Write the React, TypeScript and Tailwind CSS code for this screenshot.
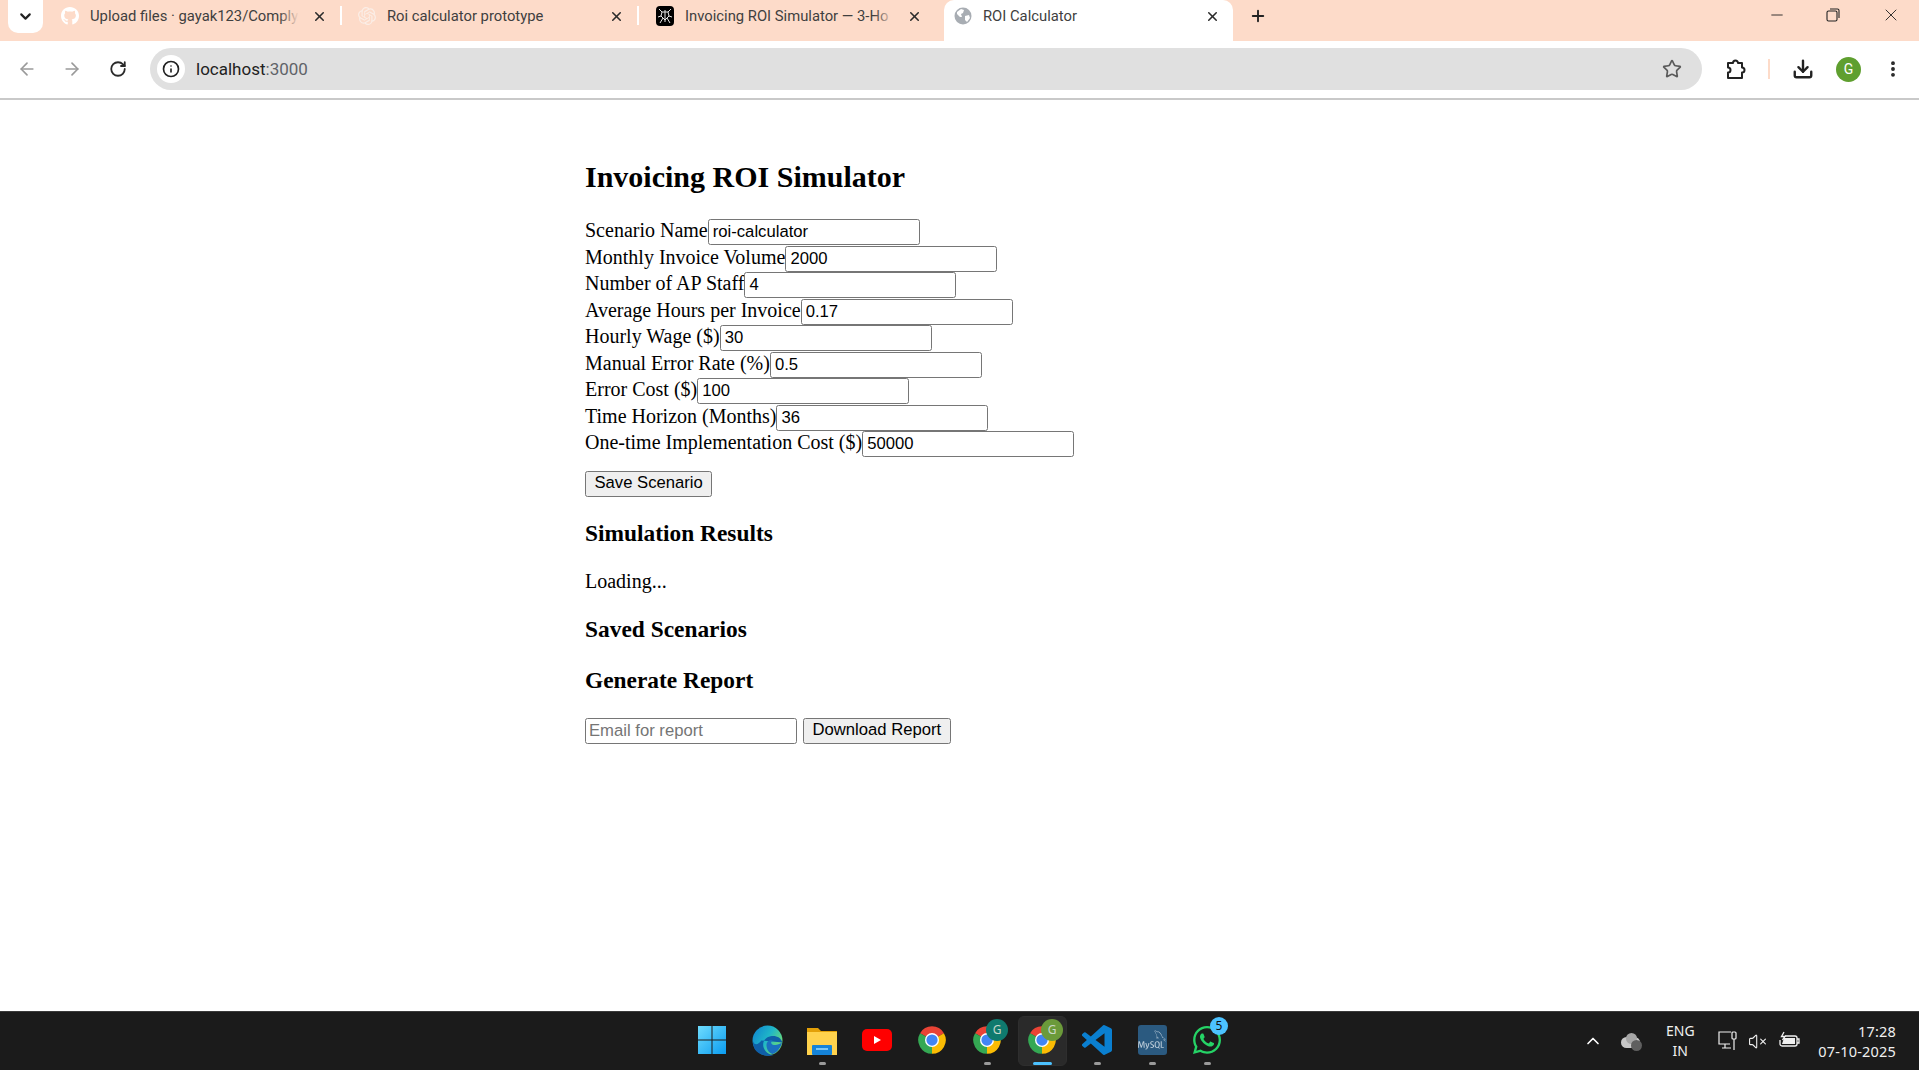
// App.tsx
import { ArrowLeft, ArrowRight, ChevronDown, ChevronUp, Download, EllipsisVertical, Info, Minus, Plus, RotateCw, Star, VolumeX, X } from "lucide-react";
import { FaGithub, FaWhatsapp } from "react-icons/fa";
import { SiMysql, SiOpenai } from "react-icons/si";

const fields = [
  ["Scenario Name", "roi-calculator"],
  ["Monthly Invoice Volume", "2000"],
  ["Number of AP Staff", "4"],
  ["Average Hours per Invoice", "0.17"],
  ["Hourly Wage ($)", "30"],
  ["Manual Error Rate (%)", "0.5"],
  ["Error Cost ($)", "100"],
  ["Time Horizon (Months)", "36"],
  ["One-time Implementation Cost ($)", "50000"],
];

function Globe() {
  return (
    <svg width="18" height="18" viewBox="0 0 18 18">
      <circle cx="9" cy="9" r="8.5" fill="#a8adb3" />
      <path d="M3 5l4-3 3 1-1 3-2 1 1 3-2 0-3-3z M11 9l4-1 1 3-3 4-2-2z" fill="#fff" />
    </svg>
  );
}

function Spider() {
  return (
    <div className="flex h-5 w-5 items-center justify-center rounded-sm bg-black">
      <svg width="16" height="16" viewBox="0 0 16 16" fill="none" stroke="#e5e5e5" strokeWidth="1">
        <path d="M8 2v12M5 4h6l1 4-4 4-4-4zM2 1l3 3M14 1l-3 3M1 9l3-1M15 9l-3-1M3 15l3-5M13 15l-3-5" />
      </svg>
    </div>
  );
}

function Tab({ icon, title, fade, active }: { icon: React.ReactNode; title: string; fade?: boolean; active?: boolean }) {
  return (
    <div className={`relative flex h-[41px] w-[289px] items-center pb-[9px] ${active ? "rounded-t-[10px] bg-white" : ""}`}>
      <div className="ml-[10px] flex w-[18px] justify-center">{icon}</div>
      <div className="relative ml-[11px] w-[209px] overflow-hidden whitespace-nowrap text-[14.8px] text-[#3f3f3f]">
        {title}
        {fade && <div className="absolute inset-y-0 right-0 w-5 bg-gradient-to-r from-transparent to-[#fddbc9]" />}
      </div>
      <X size={15} strokeWidth={2.5} className="ml-[13px] text-[#2b2b2b]" />
    </div>
  );
}

function Chrome({ badge, badgeColor }: { badge?: string; badgeColor?: string }) {
  return (
    <div className="relative h-[30px] w-[30px]">
      <svg width="30" height="30" viewBox="0 0 24 24">
        <path d="M12 12L2.47 6.5A11 11 0 0 1 21.53 6.5z" fill="#ea4335" />
        <path d="M12 12L21.53 6.5A11 11 0 0 1 12 23z" fill="#fbbc04" />
        <path d="M12 12L12 23A11 11 0 0 1 2.47 6.5z" fill="#34a853" />
        <circle cx="12" cy="12" r="5.6" fill="#fff" />
        <circle cx="12" cy="12" r="4.5" fill="#4285f4" />
      </svg>
      {badge && (
        <div className={`absolute -right-[6px] -top-[6px] flex h-[22px] w-[22px] items-center justify-center rounded-full text-[12px] text-[#c9d8c9] ${badgeColor}`}>
          {badge}
        </div>
      )}
    </div>
  );
}

function Task({ children, dot, active }: { children: React.ReactNode; dot?: boolean; active?: boolean }) {
  return (
    <div className="relative flex h-[50px] w-[55px] items-center justify-center">
      {active && <div className="absolute inset-y-0 left-[3px] right-[3px] rounded-md border border-[#2e2e2e] bg-[#2a2a2a]" />}
      <div className="relative -mt-[2px]">{children}</div>
      {dot && <div className="absolute bottom-[1px] left-[24px] h-[3px] w-[7px] rounded-full bg-[#9a9a9a]" />}
      {active && <div className="absolute bottom-[1px] left-[18px] h-[3px] w-[19px] rounded-full bg-[#4cc2ff]" />}
    </div>
  );
}

export default function App() {
  return (
    <div className="flex h-[1070px] w-[1919px] flex-col overflow-hidden bg-white font-['Liberation_Serif',serif] text-[20px] text-black">
      {/* tab strip */}
      <div className="flex h-[41px] items-start bg-[#fddbc9] font-['Roboto',sans-serif]">
        <div className="ml-[8px] flex h-[33px] w-[35px] items-center justify-center rounded-b-[10px] bg-white">
          <ChevronDown size={17} strokeWidth={3} className="text-[#222]" />
        </div>
        <div className="ml-[8px] flex">
          <div className="flex w-[297px]">
            <Tab icon={<FaGithub size={20} className="text-white" />} title="Upload files · gayak123/Comply" fade />
            <div className="mt-[6px] h-[19px] w-[2px] bg-white" />
          </div>
          <div className="flex w-[297px]">
            <Tab icon={<SiOpenai size={18} className="text-[#fbeee7]" />} title="Roi calculator prototype" />
            <div className="mt-[6px] h-[19px] w-[2px] bg-white" />
          </div>
          <div className="w-[299px] pl-[1px]">
            <Tab icon={<Spider />} title="Invoicing ROI Simulator — 3-Ho" fade />
          </div>
          <Tab icon={<Globe />} title="ROI Calculator" active />
        </div>
        <div className="ml-[16px] flex h-[32px] items-center">
          <Plus size={18} strokeWidth={2.5} className="text-[#222]" />
        </div>
        <div className="ml-auto flex h-[30px] items-center text-[#222]">
          <Minus size={18} strokeWidth={1.2} className="mr-[40px]" />
          <svg width="14" height="14" viewBox="0 0 14 14" fill="none" stroke="#222" strokeWidth="1.1" className="mr-[41px]">
            <rect x="1" y="3" width="10" height="10" rx="1.5" />
            <path d="M4 1h7.5A1.5 1.5 0 0 1 13 2.5V10" />
          </svg>
          <X size={20} strokeWidth={1.1} className="mr-[18px]" />
        </div>
      </div>

      {/* toolbar */}
      <div className="flex h-[59px] items-center rounded-t-[10px] border-b-2 border-[#c9c9c9] bg-white pb-[1px] font-['Roboto',sans-serif]">
        <ArrowLeft size={20} className="ml-[17px] text-[#9a9a9a]" />
        <ArrowRight size={20} className="ml-[25px] text-[#9a9a9a]" />
        <RotateCw size={18} strokeWidth={2.4} className="ml-[27px] text-[#2a2a2a]" />
        <div className="ml-[23px] flex h-[42px] w-[1552px] items-center rounded-full bg-[#e0e0e0]">
          <div className="ml-[7px] flex h-[28px] w-[28px] items-center justify-center rounded-full bg-white">
            <Info size={18} strokeWidth={2.2} className="text-[#222]" />
          </div>
          <div className="ml-[11px] pt-[1px] text-[17px] text-[#222]">
            localhost<span className="text-[#5f6368]">:3000</span>
          </div>
          <Star size={20} strokeWidth={2} className="ml-auto mr-[20px] text-[#5a5a5a]" />
        </div>
        <svg width="22" height="22" viewBox="0 0 22 22" fill="none" stroke="#222" strokeWidth="2" strokeLinejoin="round" className="ml-[23px]">
          <path d="M3 5h5a2.5 2.5 0 0 1 5 0h4v4.5a2.5 2.5 0 0 1 0 5V20H3v-5.500a2.500 2.500 0 0 0 0-5z" />
        </svg>
        <div className="ml-[21px] h-[20px] w-[2px] bg-[#fddbc9]" />
        <Download size={22} strokeWidth={2.6} className="ml-[22px] text-[#222]" />
        <div className="ml-[22px] flex h-[25px] w-[25px] items-center justify-center rounded-full bg-[#5f9f2f] text-[14px] text-white">G</div>
        <EllipsisVertical size={20} strokeWidth={2.6} className="ml-[22px] text-[#222]" />
      </div>

      {/* page */}
      <main className="mx-auto w-[749px] flex-1">
        <h1 className="mt-[58px] text-[30px] leading-[37px] font-bold">Invoicing ROI Simulator</h1>
        <div className="mt-[24px]">
          {fields.map(([label, value]) => (
            <div key={label} className="flex h-[26.5px] items-start">
              <label className="leading-[23px] whitespace-nowrap">{label}</label>
              <input
                readOnly
                value={value}
                className="h-[26px] w-[212px] rounded-[2.5px] border border-[#767676] px-[4px] font-['Liberation_Sans',sans-serif] text-[16.67px] outline-none"
              />
            </div>
          ))}
        </div>
        <button className="mt-[13px] h-[26px] rounded-[2.5px] border border-[#767676] bg-[#efefef] px-[8.5px] font-['Liberation_Sans',sans-serif] text-[16.67px] leading-none">
          Save Scenario
        </button>
        <h3 className="mt-[24px] text-[23.4px] leading-[25px] font-bold">Simulation Results</h3>
        <p className="mt-[24px] leading-[23px]">Loading...</p>
        <h3 className="mt-[24px] text-[23.4px] leading-[25px] font-bold">Saved Scenarios</h3>
        <h3 className="mt-[26px] text-[23.4px] leading-[25px] font-bold">Generate Report</h3>
        <div className="mt-[25px] flex gap-[6px]">
          <input
            readOnly
            placeholder="Email for report"
            className="h-[26px] w-[212px] rounded-[2.5px] border border-[#767676] px-[3px] font-['Liberation_Sans',sans-serif] text-[16.67px] outline-none placeholder:text-[#757575]"
          />
          <button className="h-[26px] rounded-[2.5px] border border-[#767676] bg-[#efefef] px-[8.5px] font-['Liberation_Sans',sans-serif] text-[16.67px] leading-none">
            Download Report
          </button>
        </div>
      </main>

      {/* taskbar */}
      <div className="grid h-[59px] grid-cols-[1fr_auto_1fr] items-center border-t border-[#3a3a3a] bg-[#1b1b1b] font-['Noto_Sans',sans-serif] text-[14px] text-[#f0f0f0]">
        <div />
        <div className="flex">
          <Task>
            <svg width="30" height="30" viewBox="0 0 30 30">
              <defs>
                <linearGradient id="win" x1="0" y1="0" x2="1" y2="1">
                  <stop offset="0" stopColor="#6fdcfd" />
                  <stop offset="1" stopColor="#0a9cf0" />
                </linearGradient>
              </defs>
              <path d="M1 1h13.5v13.5H1zM15.5 1H29v13.5H15.5zM1 15.5h13.5V29H1zM15.5 15.5H29V29H15.5z" fill="url(#win)" />
            </svg>
          </Task>
          <Task>
            <svg width="31" height="31" viewBox="0 0 30 30">
              <defs>
                <linearGradient id="edge" x1="0" y1="0" x2="1" y2="0.6">
                  <stop offset="0" stopColor="#0e7fd0" />
                  <stop offset="0.55" stopColor="#1fb6c8" />
                  <stop offset="1" stopColor="#6fdc72" />
                </linearGradient>
              </defs>
              <circle cx="15" cy="15" r="14.5" fill="url(#edge)" />
              <path d="M29.400 17C28 12 23 10 18 11c-5 1-8 5-7 10 1 4 5 8 10 8-7 2.500-14 0-18-5-1-2-2.500-6-2-8 2 5 6 2 8-1z" fill="#0f5fa8" />
              <path d="M14 19c0-3 3-5 6-4-2 1-2 3 0 4 3 1 6 0 9-2-1 5-5 10-9 11-4-1-6-5-6-9z" fill="#1b6fc0" />
            </svg>
          </Task>
          <Task dot>
            <svg width="30" height="30" viewBox="0 0 30 30">
              <path d="M0 3h11l3 3h16v24H0z" fill="#e3a008" />
              <path d="M0 7h30v23H0z" fill="#ffd24d" />
              <rect x="5" y="20" width="20" height="10" rx="1" fill="#1583d8" />
              <rect x="9" y="23" width="12" height="2" fill="#7cc7f5" />
            </svg>
          </Task>
          <Task>
            <svg width="30" height="22" viewBox="0 0 30 22">
              <rect width="30" height="22" rx="5" fill="#ff0000" />
              <path d="M12 7l7 4-7 4z" fill="#fff" />
            </svg>
          </Task>
          <Task>
            <Chrome />
          </Task>
          <Task dot>
            <Chrome badge="G" badgeColor="bg-[#0f7a6e]" />
          </Task>
          <Task active>
            <Chrome badge="G" badgeColor="bg-[#6b9a3a]" />
          </Task>
          <Task dot>
            <svg width="30" height="30" viewBox="0 0 24 24">
              <path
                d="M23.15 2.587L18.21.21a1.494 1.494 0 0 0-1.705.29l-9.46 8.63-4.12-3.128a.999.999 0 0 0-1.276.057L.327 7.261A1 1 0 0 0 .326 8.74L3.899 12 .326 15.26a1 1 0 0 0 .001 1.479L1.65 17.94a.999.999 0 0 0 1.276.057l4.12-3.128 9.46 8.63a1.492 1.492 0 0 0 1.704.29l4.942-2.377A1.5 1.5 0 0 0 24 20.06V3.939a1.5 1.5 0 0 0-.85-1.352zm-5.146 14.861L10.826 12l7.178-5.448v10.896z"
                fill="#0a7fd0"
              />
            </svg>
          </Task>
          <Task dot>
            <div className="flex h-[30px] w-[29px] items-center justify-center overflow-hidden rounded-[3px] bg-[#2b5a80]">
              <SiMysql size={28} className="text-[#b8c9d6]" />
            </div>
          </Task>
          <Task dot>
            <div className="relative">
              <FaWhatsapp size={32} className="text-[#25d366]" />
              <div className="absolute -right-[5px] -top-[7px] flex h-[18px] w-[18px] items-center justify-center rounded-full bg-[#4cc2ff] text-[12px] text-[#111]">5</div>
            </div>
          </Task>
        </div>
        <div className="flex items-center justify-end pr-[23px]">
          <ChevronUp size={20} strokeWidth={2} className="text-white" />
          <div className="relative ml-[18.5px] h-[20px] w-[21px]">
            <div className="absolute left-0 top-[6px] h-[11px] w-[19px] rounded-full bg-[#c8c8c8]" />
            <div className="absolute left-[5px] top-[2px] h-[11px] w-[11px] rounded-full bg-[#a5a5a5]" />
            <div className="absolute bottom-0 right-0 h-[11px] w-[11px] rounded-full bg-[#5f5f5f]" />
          </div>
          <div className="ml-[12px] w-[52px] text-center text-[14px] leading-[20px]">
            ENG
            <br />
            IN
          </div>
          <svg width="22" height="22" viewBox="0 0 22 22" fill="none" stroke="#f0f0f0" strokeWidth="1.2" className="ml-[11px]">
            <path d="M13 14H2V2h12M5 18h9M8 14v4M17 9v11" />
            <rect x="15" y="2" width="4" height="7" rx="1" />
          </svg>
          <VolumeX size={19} strokeWidth={1.4} className="ml-[9px] text-[#f0f0f0]" />
          <svg width="22" height="20" viewBox="0 0 22 20" fill="none" stroke="#f0f0f0" strokeWidth="1.3" className="ml-[10.5px]">
            <path d="M7 5h10a2 2 0 0 1 2 2v6a2 2 0 0 1-2 2H4a2 2 0 0 1-2-2V9" />
            <path d="M19 8h2v4h-2" />
            <path d="M6 7h11v6H4z" fill="#f0f0f0" stroke="none" />
            <path d="M6 1L3.500 5.500H7L4.500 9" />
          </svg>
          <div className="ml-[18.5px] text-right text-[14.5px] leading-[20px] tracking-[0.2px]">
            17:28
            <br />
            07-10-2025
          </div>
        </div>
      </div>
    </div>
  );
}
